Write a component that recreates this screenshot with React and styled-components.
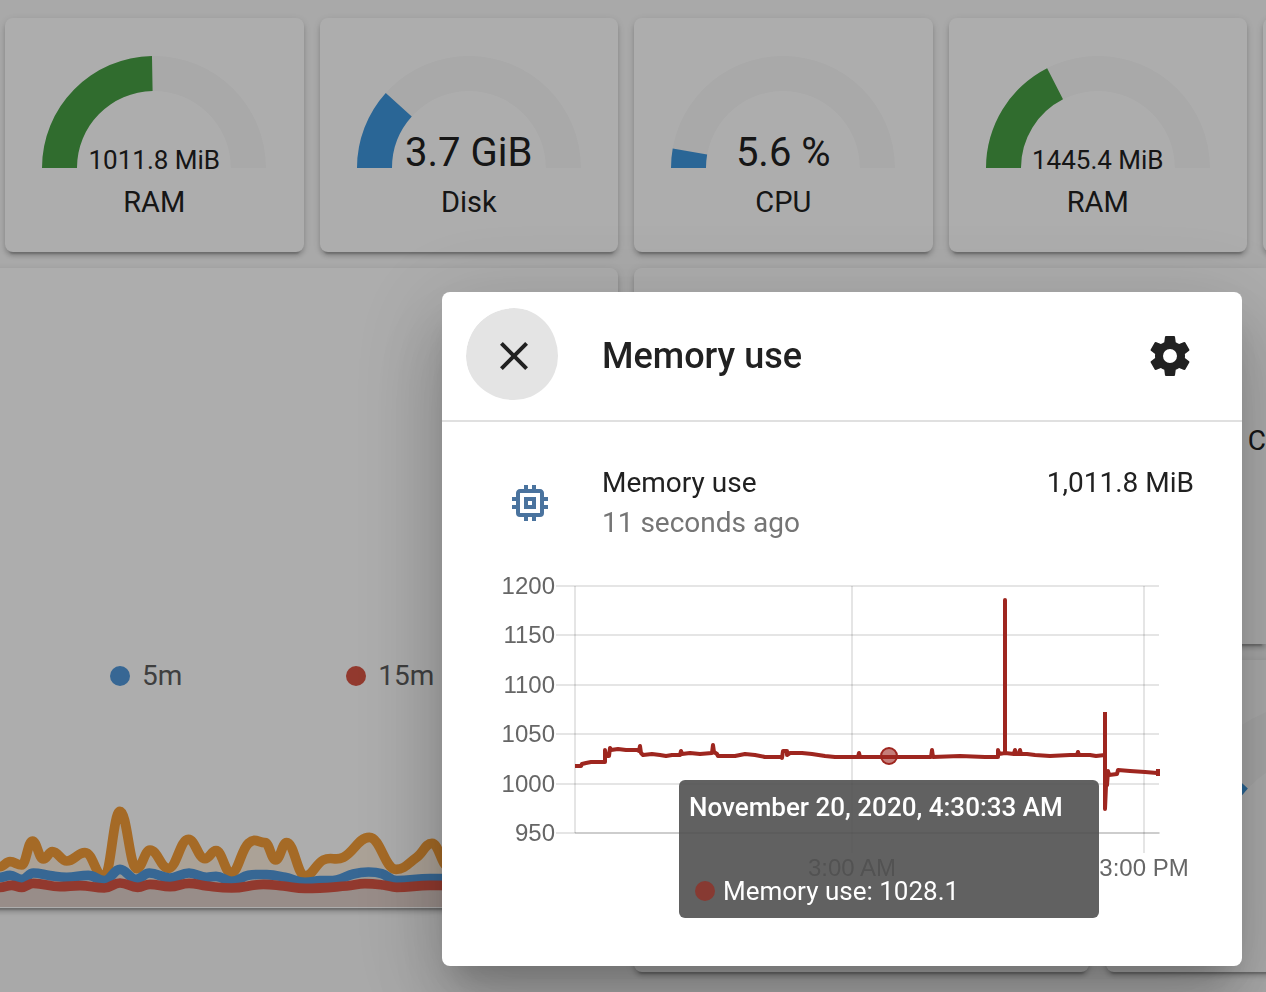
import React from 'react';
import styled, { createGlobalStyle } from 'styled-components';

const GlobalStyle = createGlobalStyle`
    * {
        box-sizing: border-box;
    }
    html, body {
        margin: 0;
        overflow: hidden;
    }
    body {
        background: #fafafa;
        color: #212121;
        font-family: Roboto, "Liberation Sans", sans-serif;
    }
`;

// Dashboard
const Board = styled.main`
    display: flex;
    flex-direction: column;
    gap: 16px;
    height: 100vh;
    padding-top: 18px;
    overflow: hidden;
`;

const GaugeRow = styled.section`
    display: grid;
    grid-auto-flow: column;
    grid-auto-columns: calc((100% - 67px) / 4);
    gap: 16px;
    padding-left: 5px;
`;

const WideGaugeRow = styled.section`
    display: grid;
    grid-auto-flow: column;
    grid-auto-columns: 72%;
    gap: 17px;
    min-height: 312px;
`;

const PanelRow = styled.section`
    display: grid;
    grid-template-columns: calc(50% - 15px) 1fr;
    align-items: start;
    gap: 16px;
`;

const PanelColumn = styled.div`
    display: flex;
    flex-direction: column;
    gap: 16px;
    min-width: 0;
`;

const Card = styled.article`
    background: #fff;
    border-radius: 8px;
    box-shadow: 0 4px 4px 0 rgba(0, 0, 0, 0.14), 0 2px 10px 0 rgba(0, 0, 0, 0.12),
        0 6px 2px -4px rgba(0, 0, 0, 0.2);
`;

const GaugeCard = styled(Card)`
    display: flex;
    flex-direction: column;
    align-items: center;
    padding: 38px 0 36px;
`;

const Dial = styled.div`
    position: relative;
    width: 75%;
    svg {
        display: block;
        width: 100%;
    }
`;

const GaugeValue = styled.div`
    position: absolute;
    right: 0;
    bottom: -5px;
    left: 0;
    font-size: ${(props) => (props.$small ? '26px' : '40px')};
    line-height: 1;
    text-align: center;
    white-space: nowrap;
`;

const GaugeLabel = styled.div`
    min-height: 28px;
    margin-top: 20px;
    font-size: 29px;
    line-height: 28px;
`;

const LoadCard = styled(Card)`
    display: flex;
    flex-direction: column;
    justify-content: flex-end;
    height: 640px;
    margin-left: -16px;
    svg {
        display: block;
        width: 100%;
        height: 108px;
    }
`;

const Legend = styled.ul`
    display: flex;
    gap: 164px;
    margin: 0 0 104px;
    padding: 0 0 0 126px;
    list-style: none;
`;

const LegendItem = styled.li`
    display: flex;
    align-items: center;
    gap: 12px;
    color: #5d5d5d;
    font-size: 28px;
    line-height: 40px;
`;

const Dot = styled.span`
    width: 20px;
    height: 20px;
    border-radius: 50%;
    background: ${(props) => props.$color};
`;

const StatCard = styled(Card)`
    display: flex;
    align-items: center;
    justify-content: flex-end;
    height: 376px;
    padding-bottom: 30px;
    border-radius: 8px 0 0 8px;
`;

const StatName = styled.span`
    flex: 0 0 12px;
    font-size: 28px;
    line-height: 32px;
`;

// Dialog
const Scrim = styled.div`
    position: fixed;
    inset: 0;
    display: flex;
    align-items: flex-start;
    justify-content: flex-end;
    padding: 292px 24px 0;
    background: rgba(0, 0, 0, 0.32);
`;

const Dialog = styled.div`
    width: 800px;
    max-width: 100%;
    background: #fff;
    border-radius: 8px;
    box-shadow: 0 22px 30px -14px rgba(0, 0, 0, 0.2), 0 48px 76px 6px rgba(0, 0, 0, 0.14),
        0 18px 92px 16px rgba(0, 0, 0, 0.12);
`;

const DialogHeader = styled.header`
    display: flex;
    align-items: center;
    height: 130px;
    padding: 0 24px;
    border-bottom: 2px solid #e0e0e0;
`;

const IconButton = styled.button`
    display: flex;
    align-items: center;
    justify-content: center;
    width: 96px;
    height: 96px;
    padding: 0;
    border: 0;
    border-radius: 50%;
    background: none;
    color: #212121;
    cursor: pointer;
`;

const CloseButton = styled(IconButton)`
    border: 2px solid transparent;
    border-width: 0 4px 4px 0;
    padding: 4px 0 0 4px;
    background: #e4e4e4;
    background-clip: padding-box;
`;

const DialogTitle = styled.h2`
    flex: 1;
    margin: 0;
    padding-left: 40px;
    font-size: 36px;
    font-weight: 500;
    line-height: 64px;
`;

const DialogBody = styled.div`
    padding: 41px 48px 78px;
`;

const StateRow = styled.div`
    display: flex;
    align-items: center;
    gap: 48px;
    margin-bottom: 25px;
    padding-left: 16px;
    font-size: 28px;
    line-height: 40px;
`;

const StateInfo = styled.div`
    flex: 1;
`;

const StateValue = styled.div`
    align-self: flex-start;
`;

const LastChanged = styled.div`
    color: #757575;
`;

const Icon = styled.svg`
    flex: none;
    width: 48px;
    height: 48px;
    fill: ${(props) => props.$color || 'currentColor'};
`;

const ChartBox = styled.div`
    position: relative;
    svg {
        display: block;
        width: 100%;
    }
    text {
        fill: #666;
        font-family: "Liberation Sans", Arial, sans-serif;
        font-size: 24px;
    }
`;

const Tooltip = styled.div`
    position: absolute;
    top: 212px;
    left: 189px;
    display: flex;
    flex-direction: column;
    justify-content: space-between;
    width: 420px;
    height: 138px;
    padding: 11px 10px;
    border-radius: 6px;
    background: rgba(80, 80, 80, 0.9);
    color: #fff;
    font-size: 26px;
    line-height: 32px;
    white-space: nowrap;
`;

const TooltipTitle = styled.div`
    font-weight: 500;
`;

const TooltipLine = styled.div`
    display: flex;
    align-items: center;
    gap: 8px;
    padding-left: 6px;
`;

const closePath =
    'M19,6.41L17.59,5L12,10.59L6.41,5L5,6.41L10.59,12L5,17.59L6.41,19L12,13.41L17.59,19L19,17.59L13.41,12L19,6.41Z';
const cogPath =
    'M12,15.5A3.5,3.5 0 0,1 8.5,12A3.5,3.5 0 0,1 12,8.5A3.5,3.5 0 0,1 15.5,12A3.5,3.5 0 0,1 12,15.5M19.43,12.97C19.47,12.65 19.5,12.33 19.5,12C19.5,11.67 19.47,11.34 19.43,11L21.54,9.37C21.73,9.22 21.78,8.95 21.66,8.73L19.66,5.27C19.54,5.05 19.27,4.96 19.05,5.05L16.56,6.05C16.04,5.66 15.5,5.32 14.87,5.07L14.5,2.42C14.46,2.18 14.25,2 14,2H10C9.75,2 9.54,2.18 9.5,2.42L9.13,5.07C8.5,5.32 7.96,5.66 7.44,6.05L4.95,5.05C4.73,4.96 4.46,5.05 4.34,5.27L2.34,8.73C2.21,8.95 2.27,9.22 2.46,9.37L4.57,11C4.53,11.34 4.5,11.67 4.5,12C4.5,12.33 4.53,12.65 4.57,12.97L2.46,14.63C2.27,14.78 2.21,15.05 2.34,15.27L4.34,18.73C4.46,18.95 4.73,19.03 4.95,18.95L7.44,17.94C7.96,18.34 8.5,18.68 9.13,18.93L9.5,21.58C9.54,21.82 9.75,22 10,22H14C14.25,22 14.46,21.82 14.5,21.58L14.87,18.93C15.5,18.67 16.04,18.34 16.56,17.94L19.05,18.95C19.27,19.03 19.54,18.95 19.66,18.73L21.66,15.27C21.78,15.05 21.73,14.78 21.54,14.63L19.43,12.97Z';
const memoryPath =
    'M17,17H7V7H17M21,11V9H19V7C19,5.89 18.1,5 17,5H15V3H13V5H11V3H9V5H7C5.89,5 5,5.89 5,7V9H3V11H5V13H3V15H5V17A2,2 0 0,0 7,19H9V21H11V19H13V21H15V19H17A2,2 0 0,0 19,17V15H21V13H19V11M13,13H11V11H13M15,9H9V15H15V9Z';

const green = '#479f44';
const blue = '#3f97dd';

// Half ring sector, from the left end clockwise
const arc = (degrees) => {
    const a = (degrees * Math.PI) / 180;
    const at = (r) => `${112 - r * Math.cos(a)},${112 - r * Math.sin(a)}`;
    return `M0,112A112,112 0 0,1 ${at(112)}L${at(77)}A77,77 0 0,0 35,112Z`;
};

function Gauge({ value, label, degrees, color, small }) {
    return (
        <GaugeCard>
            <Dial>
                <svg viewBox="0 0 224 112">
                    <path d={arc(180)} fill="#f9f9f9" />
                    <path d={arc(degrees)} fill={color} />
                </svg>
                {value && <GaugeValue $small={small}>{value}</GaugeValue>}
            </Dial>
            <GaugeLabel>{label}</GaugeLabel>
        </GaugeCard>
    );
}

const load1 = [
    [0, 680], [30, 665], [65, 675], [97, 603], [130, 657], [157, 635], [200, 663], [255, 638],
    [312, 712], [360, 514], [410, 686], [450, 630], [505, 685], [565, 598], [615, 656], [648, 632],
    [693, 699], [745, 610], [795, 608], [827, 660], [860, 608], [915, 708], [970, 660], [1030, 652],
    [1108, 592], [1188, 688], [1250, 652], [1296, 610], [1345, 680], [1500, 640], [1854, 660],
];
const load5 = [
    [0, 712], [30, 706], [65, 718], [100, 699], [150, 707], [200, 712], [265, 706], [313, 722],
    [360, 688], [408, 718], [448, 699], [510, 714], [567, 699], [620, 712], [648, 709], [695, 724],
    [745, 706], [800, 704], [855, 712], [915, 727], [960, 722], [1010, 720], [1060, 702],
    [1105, 696], [1145, 701], [1190, 722], [1290, 716], [1854, 718],
];
const load15 = [
    [0, 742], [35, 736], [65, 742], [100, 730], [180, 740], [240, 737], [313, 744], [360, 729],
    [413, 742], [450, 733], [510, 740], [567, 730], [620, 738], [695, 744], [790, 733], [850, 738],
    [915, 745], [1040, 738], [1095, 731], [1150, 735], [1190, 742], [1290, 736], [1854, 739],
];

const smooth = (points) => {
    const slope = (i) => {
        const p = points[i - 1];
        const n = points[i + 1];
        if (!p || !n) return 0;
        const y = points[i][1];
        return (y - p[1]) * (n[1] - y) <= 0 ? 0 : (n[1] - p[1]) / (n[0] - p[0]);
    };
    return points.reduce((d, [x, y], i) => {
        if (i === 0) return `M${x},${y}`;
        const [px, py] = points[i - 1];
        const step = (x - px) * 0.42;
        return `${d}C${px + step},${py + step * slope(i - 1)} ${x - step},${y - step * slope(i)} ${x},${y}`;
    }, '');
};

const loads = [
    { points: load1, color: '#f49d38', fill: 0.16 },
    { points: load5, color: '#5198da', fill: 0.15 },
    { points: load15, color: '#d85544', fill: 0.12 },
];

function LoadGraph() {
    return (
        <svg viewBox="-48 480 1902 324" preserveAspectRatio="none">
            {loads.map(({ points, color, fill }) => (
                <path key={color} d={`${smooth(points)}V801H0Z`} fill={color} fillOpacity={fill} />
            ))}
            {loads.map(({ points, color }) => (
                <path key={color} d={smooth(points)} fill="none" stroke={color} strokeWidth="29" />
            ))}
        </svg>
    );
}

const yTicks = [
    [1200, 586], [1150, 635], [1100, 685], [1050, 734], [1000, 784], [950, 833],
];

const memoryLine =
    '575,766 581,766 582,764 586,763 591,762 605,762 605,750 606,756 609,756 610,748 611,750 618,749 ' +
    '626,750 637,750 639,751 640,746 641,753 643,755 652,754 660,755 666,756 672,755 680,755 681,751 ' +
    '682,754 690,753 700,754 712,753 713,745 714,752 717,754 718,756 735,756 745,754 755,755 765,757 ' +
    '782,757 782,758 783,751 787,751 787,755 790,753 802,753 812,754 825,756 835,757 858,757 859,753 ' +
    '860,757 930,757 931,757 932,750 933,757 960,756 985,757 998,757 998,750 999,754 1005,753 1005,600 ' +
    '1005,753 1014,754 1015,750 1016,754 1019,754 1020,750 1021,754 1027,754 1035,755 1050,756 ' +
    '1070,755 1077,755 1078,752 1079,755 1090,755 1096,756 1105,755';

const memoryDrop =
    '1105,712 1105,809 1106,786 1107,785 1108,771 1109,775 1117,774 1118,770 1130,771 1145,772 ' +
    '1157,773 1158,771';

function MemoryChart() {
    return (
        <ChartBox>
            <svg viewBox="490 568 704 320" role="img" aria-label="Memory use history">
                <g stroke="#000" strokeOpacity="0.1" strokeWidth="2">
                    {yTicks.map(([tick, y]) => (
                        <path key={tick} d={`M556,${y}H1159`} />
                    ))}
                    <path d="M575,586V833M852,586V853M1144,586V853" />
                    <path d="M575,833H1160" />
                </g>
                {yTicks.map(([tick, y]) => (
                    <text key={tick} x="555" y={y + 8} textAnchor="end">
                        {tick}
                    </text>
                ))}
                <text x="852" y="876" textAnchor="middle">3:00 AM</text>
                <text x="1144" y="876" textAnchor="middle">3:00 PM</text>
                <g fill="none" stroke="#9e261f" strokeWidth="4" strokeLinejoin="round">
                    <polyline points={memoryLine} />
                    <polyline points={memoryDrop} />
                    <path d="M1158,769V776" />
                </g>
                <circle cx="889" cy="756" r="8" fill="#9e261f" fillOpacity="0.6" stroke="#9e261f" strokeWidth="2" />
            </svg>
            <Tooltip role="tooltip">
                <TooltipTitle>November 20, 2020, 4:30:33 AM</TooltipTitle>
                <TooltipLine>
                    <Dot $color="#873a32" />
                    Memory use: 1028.1
                </TooltipLine>
            </Tooltip>
        </ChartBox>
    );
}

function MoreInfoDialog() {
    return (
        <Scrim>
            <Dialog role="dialog" aria-labelledby="dialog-title">
                <DialogHeader>
                    <CloseButton type="button" aria-label="Close">
                        <Icon viewBox="0 0 24 24"><path d={closePath} /></Icon>
                    </CloseButton>
                    <DialogTitle id="dialog-title">Memory use</DialogTitle>
                    <IconButton type="button" aria-label="Settings">
                        <Icon viewBox="0 0 24 24"><path d={cogPath} /></Icon>
                    </IconButton>
                </DialogHeader>
                <DialogBody>
                    <StateRow>
                        <Icon viewBox="0 0 24 24" $color="#4a739e"><path d={memoryPath} /></Icon>
                        <StateInfo>
                            <div>Memory use</div>
                            <LastChanged>11 seconds ago</LastChanged>
                        </StateInfo>
                        <StateValue>1,011.8 MiB</StateValue>
                    </StateRow>
                    <MemoryChart />
                </DialogBody>
            </Dialog>
        </Scrim>
    );
}

function App() {
    return (
        <>
            <GlobalStyle />
            <Board>
                <GaugeRow>
                    <Gauge value="1011.8 MiB" label="RAM" degrees={89} color={green} small />
                    <Gauge value="3.7 GiB" label="Disk" degrees={42} color={blue} />
                    <Gauge value="5.6 %" label="CPU" degrees={10} color={blue} />
                    <Gauge value="1445.4 MiB" label="RAM" degrees={63} color={green} small />
                    <Card />
                </GaugeRow>
                <PanelRow>
                    <LoadCard>
                        <Legend>
                            <LegendItem><Dot $color="#5198da" />5m</LegendItem>
                            <LegendItem><Dot $color="#d85544" />15m</LegendItem>
                        </Legend>
                        <LoadGraph />
                    </LoadCard>
                    <PanelColumn>
                        <StatCard>
                            <StatName>C</StatName>
                        </StatCard>
                        <WideGaugeRow>
                            <Card />
                            <Gauge degrees={43} color={blue} />
                        </WideGaugeRow>
                    </PanelColumn>
                </PanelRow>
            </Board>
            <MoreInfoDialog />
        </>
    );
}

export default App;
